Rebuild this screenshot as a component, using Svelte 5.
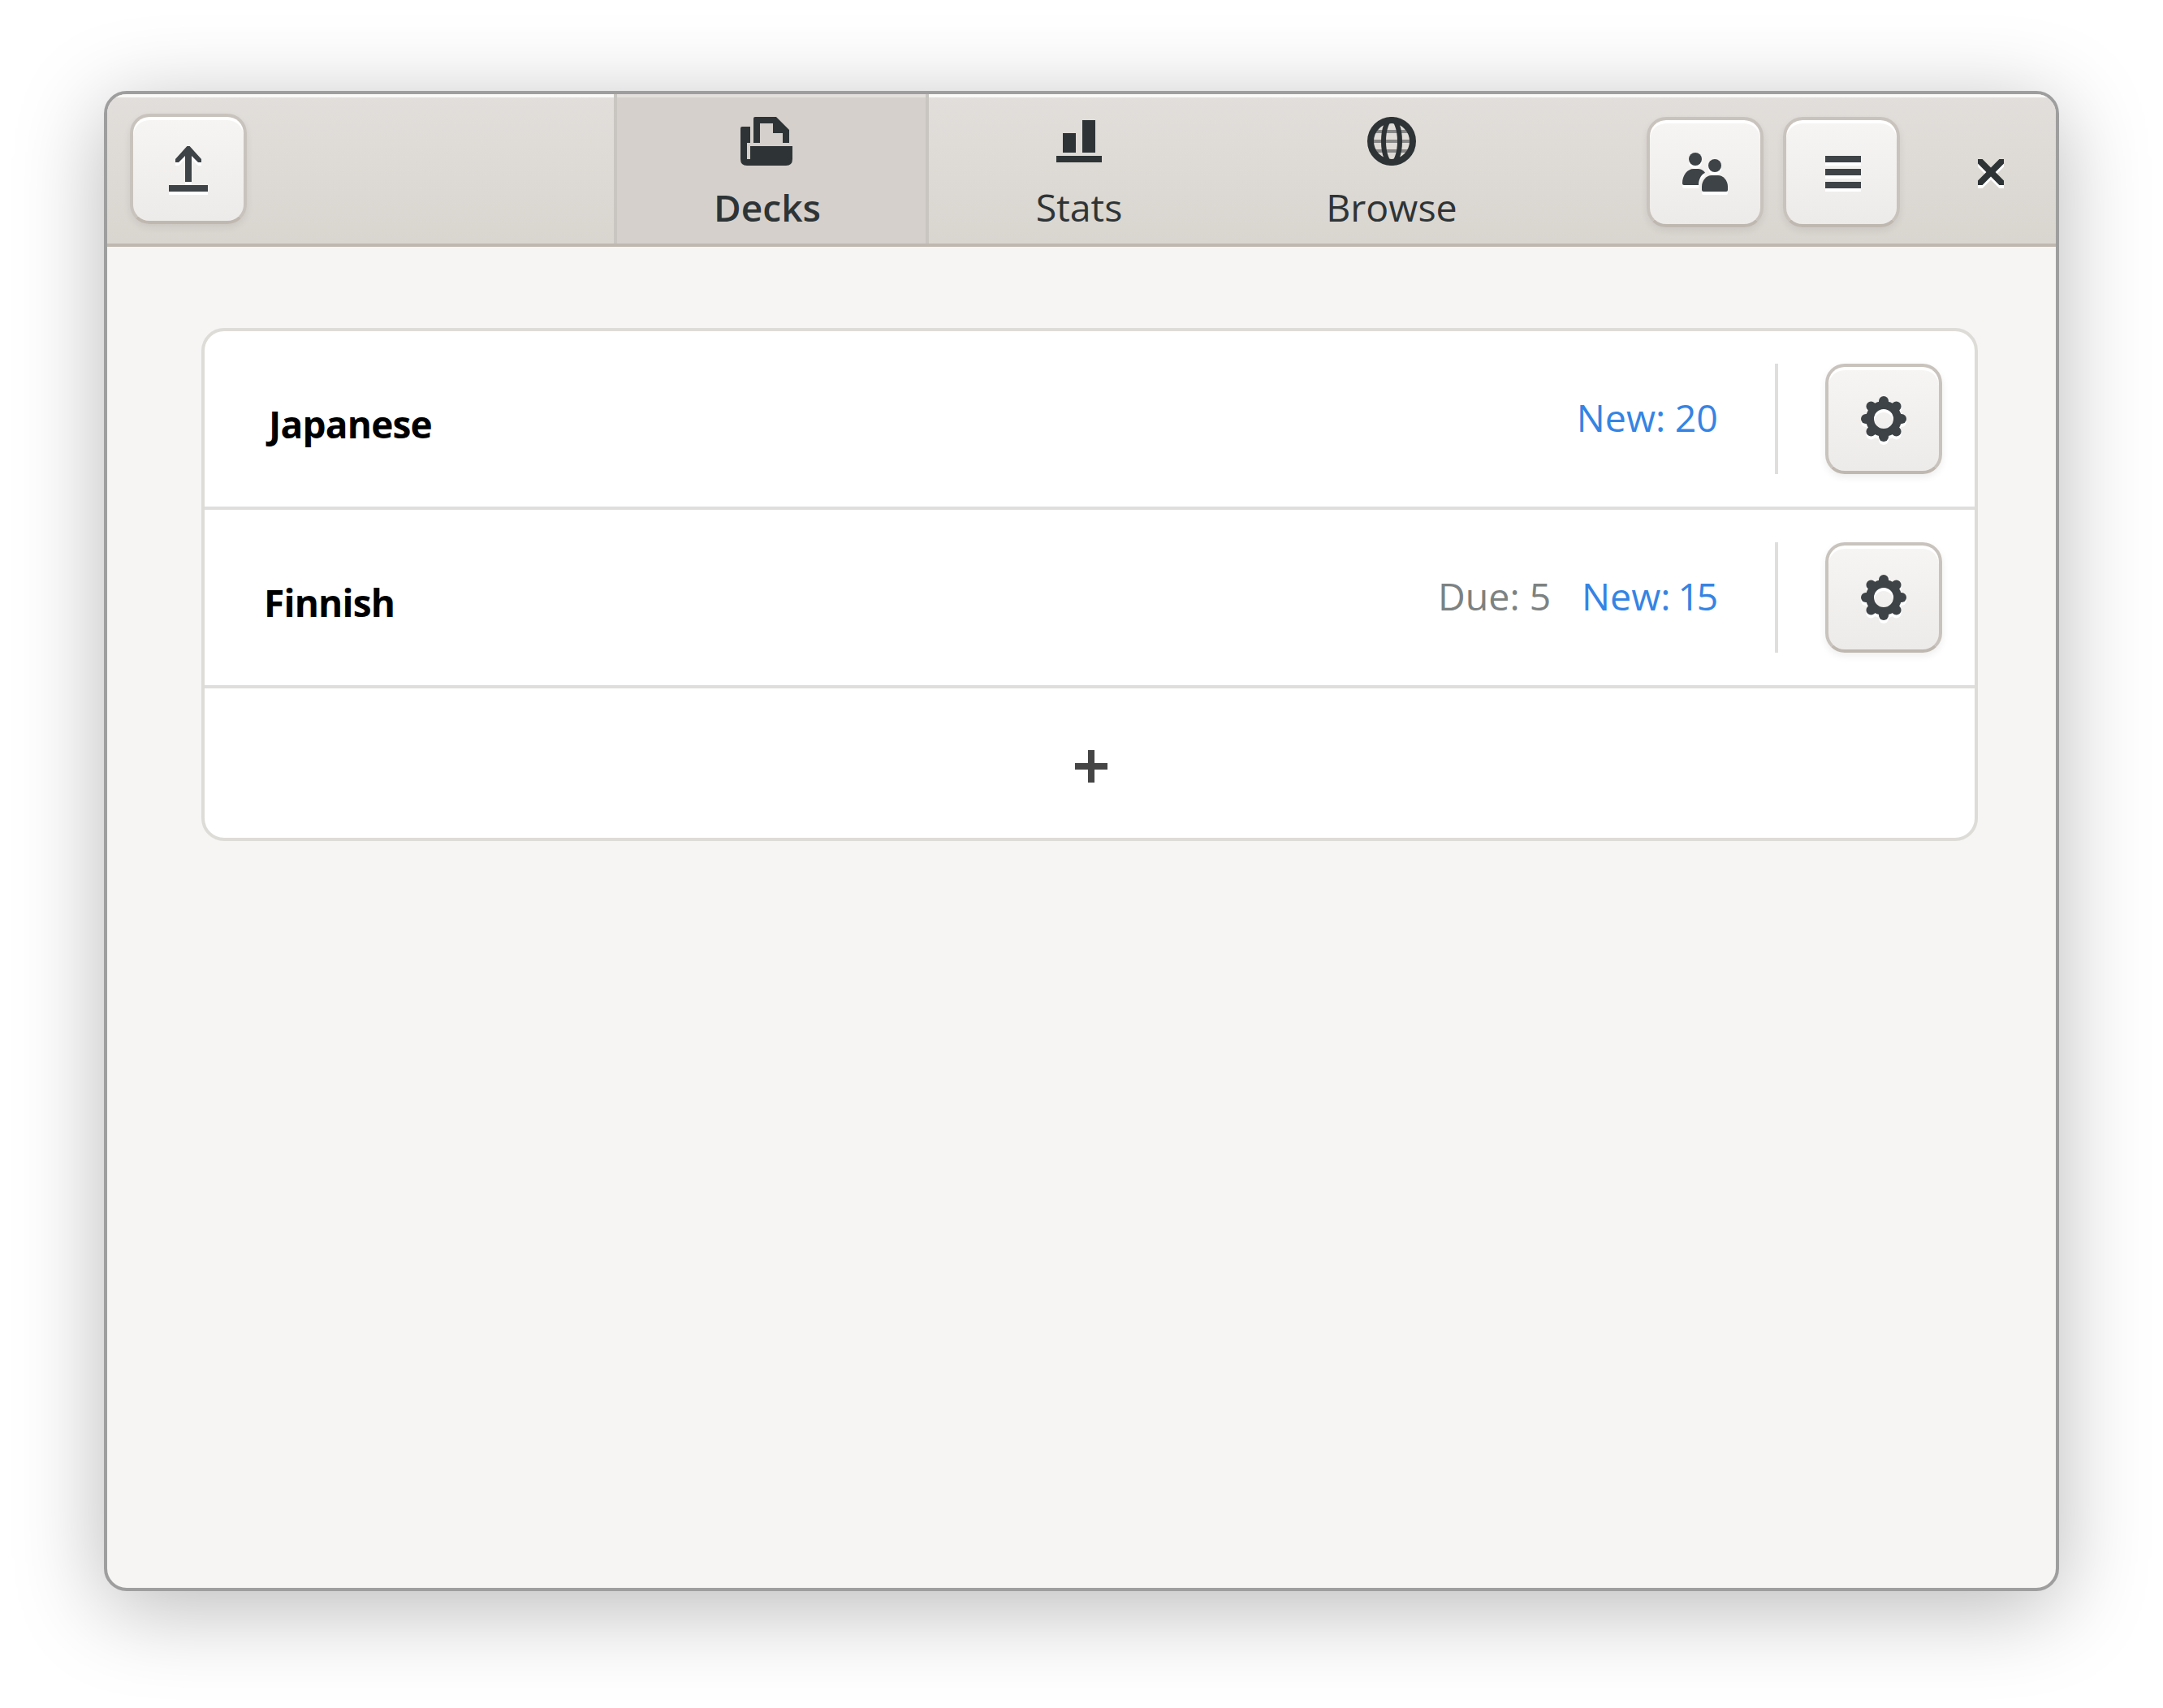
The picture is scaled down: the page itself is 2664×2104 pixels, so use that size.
<script>
	const decks = [
		{ name: 'Japanese', inset: 6, due: 0, fresh: 20 },
		{ name: 'Finnish', inset: 0, due: 5, fresh: 15 }
	];
	const teeth = [0, 45, 90, 135, 180, 225, 270, 315];
</script>

<div class="page">
	<div class="window">
		<header class="header">
			<div class="start">
				<button class="btn">
					<svg class="icon raised dark" viewBox="0 0 16 16">
						<path d="M7.6 1h.8L12 5v1h-1L9 4v8H7V4L5 6H4V5z" />
						<path d="M2 13h12v2H2z" />
					</svg>
				</button>
			</div>
			<nav class="tabs">
				<div class="tab active">
					<svg class="icon ink" viewBox="0 0 16 16">
						<path d="M4.5 0H11l4 4v4h-2V5h-3V2H6v6H4V.5Q4 0 4.5 0z" />
						<path d="M.5 3H3v5H2v5h1V9h13v4q0 2-2 2H2q-2 0-2-2V3.5Q0 3 .5 3z" />
					</svg>
					<span class="label">Decks</span>
				</div>
				<div class="tab">
					<svg class="icon ink" viewBox="0 0 16 16">
						<path d="M3 5h4v6H3zM9 1h4v10H9zM1 12h14v2H1z" />
					</svg>
					<span class="label">Stats</span>
				</div>
				<div class="tab">
					<svg class="icon" viewBox="0 0 64 64">
						<g fill="none" stroke="#2e3436">
							<path d="M6 18h52M6 30h52M6 42h52" stroke-width="4" opacity=".5" />
							<circle cx="32" cy="30" r="26" stroke-width="8" />
							<ellipse cx="32" cy="30" rx="10" ry="27" stroke-width="6" />
						</g>
					</svg>
					<span class="label">Browse</span>
				</div>
			</nav>
			<div class="end">
				<button class="btn">
					<svg class="icon raised dark" viewBox="0 0 16 16">
						<circle cx="5" cy="4" r="2" />
						<path d="M1 11.5C1 9 2.5 7 4.5 7h1C6.6 7 7.4 7.3 8 8.2 7 8.7 6 10 6 12H1.5Q1 12 1 11.5z" />
						<circle cx="11" cy="6" r="2" />
						<path d="M7 13.5v-1C7 10.5 8.5 9 10 9h2c1.5 0 3 1.5 3 3.5v1q0 .5-.5.5h-7q-.5 0-.5-.5z" />
					</svg>
				</button>
				<button class="btn">
					<svg class="icon raised dark" viewBox="0 0 16 16">
						<path d="M3 3h11v2H3zM3 7h11v2H3zM3 11h11v2H3z" />
					</svg>
				</button>
				<svg class="icon raised ink close" viewBox="0 0 16 16">
					<path d="M4 4h1.400L8 6.600 10.600 4H12v1.400L9.400 8 12 10.600V12h-1.400L8 9.400 5.400 12H4v-1.400L6.600 8 4 5.400z" />
				</svg>
			</div>
		</header>
		<main class="content">
			<section class="card">
				{#each decks as deck}
					<div class="row">
						<span class="name" style="margin-left: {deck.inset}px">{deck.name}</span>
						<div class="counts">
							{#if deck.due}
								<span class="due">Due: {deck.due}</span>
							{/if}
							<span class="new">New: {deck.fresh}</span>
						</div>
						<span class="sep"></span>
						<button class="btn">
							<svg class="icon raised" viewBox="0 0 64 64">
								<circle cx="32" cy="32" r="17" fill="none" stroke="#3d4346" stroke-width="10" />
								{#each teeth as a}
									<path d="M32 10v2" stroke="#3d4346" stroke-width="12" stroke-linecap="round" transform="rotate({a} 32 32)" />
								{/each}
							</svg>
						</button>
					</div>
				{/each}
				<div class="add">
					<svg class="icon plus" viewBox="0 0 64 64">
						<path d="M28 12h8v16h16v8H36v16h-8V36H12v-8h16z" />
					</svg>
				</div>
			</section>
		</main>
	</div>
</div>

<style>
	:global(body) {
		margin: 0;
		background: #fff;
	}

	.page {
		box-sizing: border-box;
		width: 2664px;
		height: 2104px;
		padding: 112px 128px 144px;
		font-family: "Open Sans", sans-serif;
	}

	.window {
		box-sizing: border-box;
		height: 1848px;
		display: flex;
		flex-direction: column;
		background: #f6f5f4;
		border: 4px solid #9e9e9e;
		border-radius: 28px;
		overflow: hidden;
		box-shadow: 0 20px 110px rgba(0, 0, 0, .28);
	}

	.header {
		flex: none;
		height: 188px;
		box-sizing: border-box;
		display: flex;
		align-items: stretch;
		background: linear-gradient(#e2dedb, #d9d5cf);
		border-bottom: 4px solid #bfb8b0;
		box-shadow: inset 0 4px 0 #faf9f8;
	}

	.start {
		flex: none;
		width: 624px;
		box-sizing: border-box;
		padding-left: 28px;
		display: flex;
		align-items: center;
	}

	.tabs {
		flex: none;
		display: flex;
	}

	.tab {
		width: 385px;
		box-sizing: border-box;
		padding: 28px 15px 0 0;
		display: flex;
		flex-direction: column;
		align-items: center;
		color: #2e3436;
	}

	.tab.active {
		width: 388px;
		padding-right: 10px;
		background: #d5d0cc;
		border-left: 4px solid #c9c5c0;
		border-right: 4px solid #c9c5c0;
		box-shadow: inset 0 4px 0 #e3dfdb;
	}

	.active .icon {
		margin-left: -2px;
	}

	.label {
		font-size: 46.5px;
		line-height: 62px;
		margin-top: 16px;
	}

	.active .label {
		font-weight: 600;
		font-size: 46px;
	}

	.end {
		flex: 1;
		display: flex;
		align-items: center;
		justify-content: flex-end;
		gap: 24px;
		padding: 8px 48px 0 0;
	}

	.close {
		margin-left: 56px;
	}

	.btn {
		flex: none;
		width: 144px;
		height: 136px;
		box-sizing: border-box;
		padding: 0;
		display: flex;
		align-items: center;
		justify-content: center;
		background: linear-gradient(#f6f5f3, #edebe9);
		border: 4px solid #c9c3bd;
		border-bottom-color: #bfb8b1;
		border-radius: 24px;
		box-shadow: inset 0 4px 0 #fff, 0 4px 10px rgba(0, 0, 0, .07);
	}

	.icon {
		display: block;
		flex: none;
		width: 64px;
		height: 64px;
	}

	.raised {
		filter: drop-shadow(0 4px 0 #fff);
	}

	.dark {
		fill: #3d4346;
	}

	.ink {
		fill: #2e3436;
	}

	.content {
		flex: 1;
		padding: 100px 96px 0 116px;
	}

	.card {
		background: #fff;
		border: 4px solid #dedcd7;
		border-radius: 28px;
		overflow: hidden;
	}

	.row {
		height: 220px;
		box-sizing: border-box;
		padding: 0 40px 0 73px;
		display: flex;
		align-items: center;
		border-bottom: 4px solid #dfdedd;
	}

	.name {
		flex: 1;
		padding-top: 12px;
		font-size: 46px;
		font-weight: 700;
		letter-spacing: -.8px;
		color: #000;
	}

	.counts {
		display: flex;
		gap: 38px;
		margin-bottom: 4px;
		font-size: 46.5px;
		line-height: 62px;
		font-variant-numeric: proportional-nums;
	}

	.due {
		color: #7d8281;
	}

	.new {
		color: #3584e4;
	}

	.sep {
		width: 4px;
		height: 136px;
		margin: 0 58px 0 70px;
		background: #dfdedd;
	}

	.add {
		height: 184px;
		padding: 8px 0 0 4px;
		box-sizing: border-box;
		display: flex;
		align-items: center;
		justify-content: center;
	}

	.plus {
		fill: #454545;
	}
</style>
